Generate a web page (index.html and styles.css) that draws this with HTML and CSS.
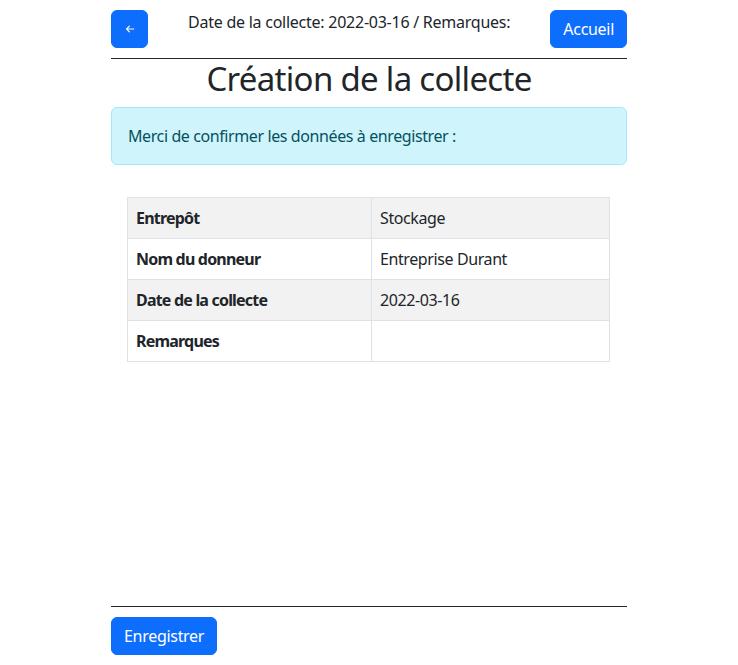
FILE: index.html
```html
<!DOCTYPE html>
<html lang="fr">
<head>
<meta charset="utf-8">
<title>Création de la collecte</title>
<link rel="stylesheet" href="styles.css">
</head>
<body>
<div class="container">
  <header class="topbar">
    <button class="btn btn-back" aria-label="Retour">
      <svg width="10" height="10" viewBox="0 0 16 16" fill="none" stroke="#fff" stroke-width="1.8" stroke-linecap="round" stroke-linejoin="round"><path d="M14 8H2.5M7 3.5 2.5 8 7 12.5"/></svg>
    </button>
    <div class="summary">Date de la collecte: 2022-03-16 / Remarques:</div>
    <button class="btn">Accueil</button>
  </header>
  <hr class="rule">
  <h1 class="title">Création de la collecte</h1>
  <div class="alert">Merci de confirmer les données à enregistrer :</div>
  <div class="table-wrap">
    <table class="data">
      <tbody>
        <tr><th>Entrepôt</th><td>Stockage</td></tr>
        <tr><th>Nom du donneur</th><td>Entreprise Durant</td></tr>
        <tr><th>Date de la collecte</th><td>2022-03-16</td></tr>
        <tr><th>Remarques</th><td></td></tr>
      </tbody>
    </table>
  </div>
  <div class="spacer"></div>
  <hr class="rule">
  <button class="btn">Enregistrer</button>
</div>
</body>
</html>
```
FILE: styles.css
```css
* { box-sizing: border-box; }
html, body { margin: 0; padding: 0; }
body {
  font-family: "Noto Sans", "Open Sans", sans-serif;
  font-size: 16px;
  line-height: 1.5;
  color: #212529;
  background: #fff;
  letter-spacing: -0.4px;
}
.container {
  width: 516px;
  margin: 0 auto;
  padding-top: 10px;
  display: flex;
  flex-direction: column;
  min-height: 665px;
}
.topbar {
  display: flex;
  justify-content: space-between;
  align-items: flex-start;
}
.btn {
  font-family: inherit;
  font-size: 16px;
  line-height: 24px;
  letter-spacing: -0.3px;
  color: #fff;
  background: #0d6efd;
  border: 1px solid #0d6efd;
  border-radius: 6px;
  padding: 6px 12px;
  cursor: pointer;
  align-self: flex-start;
}
.btn-back {
  width: 37px;
  height: 38px;
  display: flex;
  align-items: center;
  justify-content: center;
  padding: 0;
}
.summary {
  padding-top: 0;
  line-height: 24px;
  letter-spacing: -0.25px;
}
.rule {
  border: 0;
  border-top: 1px solid #212529;
  margin: 10px 0 0;
  width: 100%;
}
.title {
  font-weight: 400;
  font-size: 33px;
  line-height: 40px;
  letter-spacing: -0.7px;
  text-align: center;
  margin: 0 0 8px;
}
.alert {
  background: #cff4fc;
  border: 1px solid #9eeaf9;
  color: #055160;
  border-radius: 6px;
  padding: 16px 16px;
  margin-bottom: 32px;
}
.table-wrap { padding: 0 17px 0 16px; }
.data {
  width: 100%;
  border-collapse: collapse;
  border: 1px solid #dee2e6;
}
.data th, .data td {
  border: 1px solid #dee2e6;
  padding: 8px;
  text-align: left;
  height: 41px;
}
.data th { font-weight: 700; width: 244px; letter-spacing: -0.8px; }
.data tr:nth-child(odd) th, .data tr:nth-child(odd) td { background: #f2f2f2; }
.spacer { flex: 1; }
.container > .btn { margin: 10px 0 10px; }
```
